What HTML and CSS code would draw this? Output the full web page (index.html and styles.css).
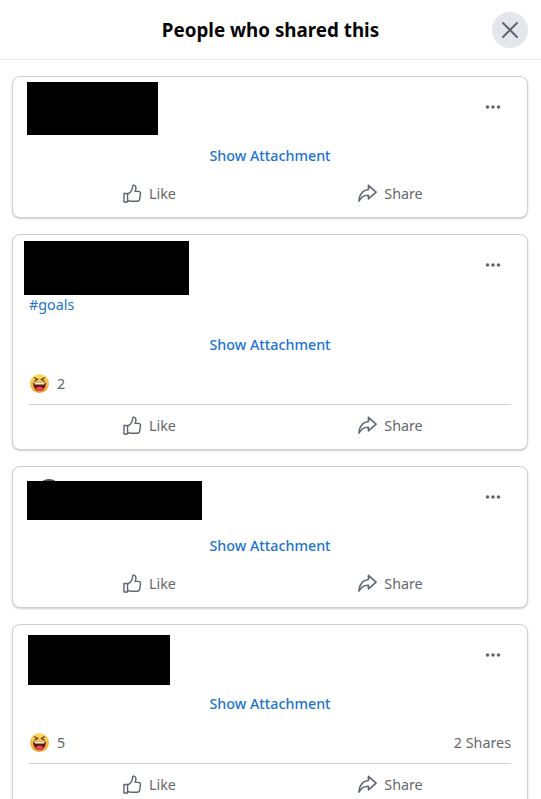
FILE: index.html
```html
<!DOCTYPE html>
<html lang="en">
<head>
  <meta charset="UTF-8">
  <meta name="viewport" content="width=device-width, initial-scale=1.0">
  <title>People who shared this</title>
  <link rel="stylesheet" href="styles.css">
</head>
<body>

  <svg class="icon-defs" width="0" height="0">
    <defs>
      <linearGradient id="haha-fill" x1="0" y1="0" x2="0" y2="1">
        <stop offset="0" stop-color="#fcdc68"/>
        <stop offset="1" stop-color="#f29a2e"/>
      </linearGradient>
      <symbol id="icon-like" viewBox="0 0 20 20">
        <path d="M1 10h3.800v9H1z" fill="none" stroke="currentColor" stroke-width="1.500" stroke-linejoin="round"/>
        <path d="M4.800 10.500c2.200-.9 3.900-2.700 4.700-4.800.5-1.300.5-2.500.6-3.500.1-.8.600-1.200 1.300-1 1.500.3 2.200 1.600 2.200 3.200 0 1.200-.4 2.400-.9 3.400h3.400c1.500 0 2.500 1.100 2.300 2.500l-.8 5.400c-.2 1.500-1.200 2.500-2.700 2.500H8.400c-1.400 0-2.400-.4-3.600-.9" fill="none" stroke="currentColor" stroke-width="1.500" stroke-linejoin="round" stroke-linecap="round"/>
      </symbol>
      <symbol id="icon-share" viewBox="0 0 20 20">
        <path d="M11 1.500 19 8.600l-8 7v-3.800C6.700 11.600 3.500 13.500 1 18c.3-6.800 3.900-11.500 10-12.200z" fill="none" stroke="currentColor" stroke-width="1.700" stroke-linejoin="round"/>
      </symbol>
      <symbol id="icon-haha" viewBox="0 0 18 18">
        <circle cx="9" cy="9" r="9" fill="url(#haha-fill)"/>
        <path d="M4.200 3.600 7.300 5.200 4.600 6.600M13.800 3.600 10.700 5.200 13.400 6.600" fill="none" stroke="#5a3d18" stroke-width="1.200" stroke-linecap="round" stroke-linejoin="round"/>
        <path d="M3 8.200h12c0 4.700-2.600 7.800-6 7.800s-6-3.100-6-7.800z" fill="#5b1a14"/>
        <path d="M4.200 8.200h9.600c0 .8-.2 1.300-.5 1.800H4.700c-.3-.5-.5-1-.5-1.800z" fill="#fff3e0"/>
        <path d="M5.200 13.600c1-1 2.300-1.500 3.800-1.500s2.800.5 3.800 1.500c-1 1.500-2.300 2.400-3.800 2.400s-2.800-.9-3.800-2.400z" fill="#f0455a"/>
      </symbol>
      <symbol id="icon-more" viewBox="0 0 16 4">
        <circle cx="2.500" cy="2" r="1.800" fill="currentColor"/>
        <circle cx="8" cy="2" r="1.800" fill="currentColor"/>
        <circle cx="13.500" cy="2" r="1.800" fill="currentColor"/>
      </symbol>
    </defs>
  </svg>

  <header class="dialog-header">
    <h1>People who shared this</h1>
    <button class="close-btn" aria-label="Close">
      <svg width="16" height="16" viewBox="0 0 16 16"><path d="M1 1l14 14M15 1 1 15" stroke="currentColor" stroke-width="2" stroke-linecap="round"/></svg>
    </button>
  </header>

  <main class="share-list">

    <article class="post-card">
      <div class="post-top">
        <div class="redacted redact-one"></div>
        <svg class="more-icon"><use href="#icon-more"/></svg>
      </div>
      <a class="attachment-link">Show Attachment</a>
      <div class="post-actions">
        <span class="action"><svg class="action-icon"><use href="#icon-like"/></svg>Like</span>
        <span class="action"><svg class="action-icon"><use href="#icon-share"/></svg>Share</span>
      </div>
    </article>

    <article class="post-card">
      <div class="post-top">
        <div class="redacted redact-two"></div>
        <svg class="more-icon"><use href="#icon-more"/></svg>
      </div>
      <a class="hashtag">#goals</a>
      <a class="attachment-link attachment-after-text">Show Attachment</a>
      <div class="post-stats">
        <span class="reactions"><svg class="haha"><use href="#icon-haha"/></svg>2</span>
      </div>
      <div class="post-actions">
        <span class="action"><svg class="action-icon"><use href="#icon-like"/></svg>Like</span>
        <span class="action"><svg class="action-icon"><use href="#icon-share"/></svg>Share</span>
      </div>
    </article>

    <article class="post-card">
      <div class="post-top">
        <div class="avatar"></div>
        <div class="redacted redact-three"></div>
        <svg class="more-icon"><use href="#icon-more"/></svg>
      </div>
      <a class="attachment-link">Show Attachment</a>
      <div class="post-actions">
        <span class="action"><svg class="action-icon"><use href="#icon-like"/></svg>Like</span>
        <span class="action"><svg class="action-icon"><use href="#icon-share"/></svg>Share</span>
      </div>
    </article>

    <article class="post-card">
      <div class="post-top">
        <div class="redacted redact-four"></div>
        <svg class="more-icon"><use href="#icon-more"/></svg>
      </div>
      <a class="attachment-link">Show Attachment</a>
      <div class="post-stats">
        <span class="reactions"><svg class="haha"><use href="#icon-haha"/></svg>5</span>
        <span>2 Shares</span>
      </div>
      <div class="post-actions">
        <span class="action"><svg class="action-icon"><use href="#icon-like"/></svg>Like</span>
        <span class="action"><svg class="action-icon"><use href="#icon-share"/></svg>Share</span>
      </div>
    </article>

  </main>

</body>
</html>
```

FILE: styles.css
```css
body {
  margin: 0;
  height: 799px;
  overflow: hidden;
  background: white;
  font-family: "Noto Sans", Roboto, Arial, sans-serif;
  font-size: 14.3px;
  color: #65676b;
}
.icon-defs {
  position: absolute;
}
.dialog-header {
  height: 59px;
  display: flex;
  align-items: center;
  justify-content: center;
  border-bottom: 1px solid #e4e6eb;
  position: relative;
}
.dialog-header h1 {
  margin: 0;
  font-size: 18.8px;
  font-weight: 700;
  color: #050505;
}
.close-btn {
  position: absolute;
  right: 13px;
  top: 12px;
  width: 36px;
  height: 36px;
  padding: 0;
  border: none;
  border-radius: 50%;
  background: #e4e6eb;
  color: #606770;
  display: flex;
  align-items: center;
  justify-content: center;
}
.share-list {
  padding: 16px 13px 0 12px;
  display: flex;
  flex-direction: column;
  gap: 16px;
}
.post-card {
  flex-shrink: 0;
  padding: 0 16px;
  background: white;
  border: 1px solid #ced0d4;
  border-radius: 8px;
  box-shadow: 0 1px 2px rgba(0, 0, 0, 0.2);
  display: flex;
  flex-direction: column;
}
.post-top {
  height: 60px;
  position: relative;
}
.redacted {
  position: absolute;
  background: black;
}
.redact-one {
  left: -2px;
  top: 5px;
  width: 131px;
  height: 53px;
}
.redact-two {
  left: -5px;
  top: 6px;
  width: 165px;
  height: 54px;
}
.redact-three {
  left: -2px;
  top: 14px;
  width: 175px;
  height: 39px;
}
.redact-four {
  left: -1px;
  top: 10px;
  width: 142px;
  height: 50px;
}
.avatar {
  position: absolute;
  left: 8px;
  top: 12px;
  width: 24px;
  height: 24px;
  border-radius: 50%;
  background: #555;
}
.more-icon {
  position: absolute;
  right: 10px;
  top: 28px;
  width: 16px;
  height: 4px;
  color: #65676b;
}
.hashtag {
  color: #1c74d0;
  line-height: 20px;
}
.attachment-link {
  margin: 9px 0 7px;
  color: #1c74d0;
  line-height: 20px;
  text-align: center;
  font-weight: 500;
}
.attachment-after-text {
  margin: 20px 0 7px;
}
.post-stats {
  height: 42px;
  display: flex;
  align-items: center;
  justify-content: space-between;
  border-bottom: 1px solid #ced0d4;
}
.reactions {
  display: flex;
  align-items: center;
  gap: 8px;
}
.haha {
  width: 19px;
  height: 19px;
  margin-left: 1px;
}
.post-actions {
  height: 40px;
  padding-bottom: 4px;
  display: flex;
}
.action {
  flex: 1;
  display: flex;
  align-items: center;
  justify-content: center;
  gap: 7px;
}
.action-icon {
  width: 19px;
  height: 19px;
  color: #606770;
}
```
